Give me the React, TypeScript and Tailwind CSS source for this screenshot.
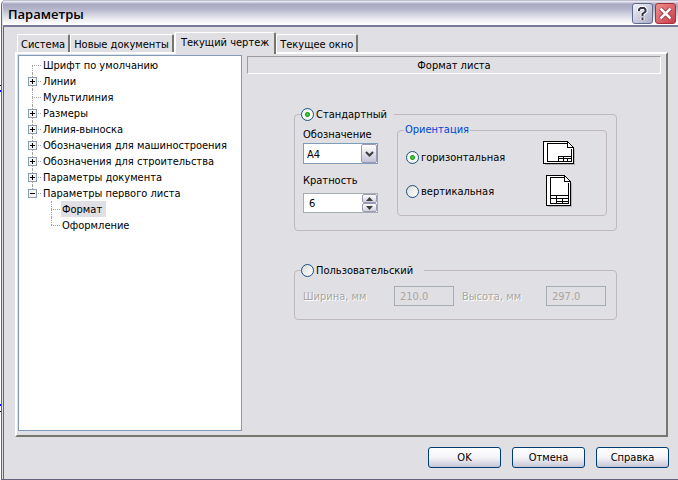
import React, { useState } from 'react';

interface TreeNode {
  label: string;
  mark?: 'plus' | 'minus';
}

const TABS = ['Система', 'Новые документы', 'Текущий чертеж', 'Текущее окно'];

const TREE: TreeNode[] = [
  { label: 'Шрифт по умолчанию' },
  { label: 'Линии', mark: 'plus' },
  { label: 'Мультилиния' },
  { label: 'Размеры', mark: 'plus' },
  { label: 'Линия-выноска', mark: 'plus' },
  { label: 'Обозначения для машиностроения', mark: 'plus' },
  { label: 'Обозначения для строительства', mark: 'plus' },
  { label: 'Параметры документа', mark: 'plus' },
  { label: 'Параметры первого листа', mark: 'minus' }
];

const SUB_TREE = ['Формат', 'Оформление'];

const RADIO =
  'appearance-none w-[13px] h-[13px] shrink-0 rounded-full border border-[#1c5180] bg-[linear-gradient(135deg,#dcdcd7,#ffffff)] checked:bg-[radial-gradient(circle,#55d551_0,#21a121_2px,#21a121_2px,#f6f6f4_3px)]';

const FIELDSET = 'min-w-0 border border-[#bfb8bf] rounded-[4px]';

const SPIN_BUTTON =
  'flex flex-1 items-center justify-center rounded-[2px] border border-[#9a9ab4] bg-[linear-gradient(#ffffff,#d0d0de)]';

function ExpandMark({ kind }: { kind: 'plus' | 'minus' }) {
  return (
    <svg width="9" height="9" viewBox="0 0 9 9" shapeRendering="crispEdges">
      <rect x="0.5" y="0.5" width="8" height="8" fill="#f4f3f0" stroke="#8d9bb5" />
      <path d={kind === 'plus' ? 'M2 4.5H7M4.5 2V7' : 'M2 4.5H7'} stroke="#000" />
    </svg>
  );
}

function TreeRow({ node, first, last }: { node: TreeNode; first: boolean; last: boolean }) {
  return (
    <button type="button" className="flex h-4 items-center text-left">
      <span className="relative flex h-4 w-[15px] items-center">
        <span className={`absolute left-1 border-l border-dotted border-[#a0a0a0] ${first ? 'top-2 bottom-0' : last ? 'top-0 h-2' : 'inset-y-0'}`} />
        <span className="absolute left-1 right-[2px] top-2 border-t border-dotted border-[#a0a0a0]" />
        {node.mark && (
          <span className="relative">
            <ExpandMark kind={node.mark} />
          </span>
        )}
      </span>
      <span className="whitespace-nowrap pt-[2px]">{node.label}</span>
    </button>
  );
}

export default function App() {
  const [tab, setTab] = useState(2);
  const [node, setNode] = useState(0);
  const [mode, setMode] = useState('standard');
  const [orient, setOrient] = useState('horizontal');
  const [factor, setFactor] = useState(6);

  return (
    <div className="relative min-h-screen flex flex-col bg-white pl-px font-['DejaVu_Sans_Condensed','DejaVu_Sans',sans-serif] text-[11px] leading-4 text-black">
      {/* Drawing behind the dialog */}
      <span className="absolute left-0 top-[85px] h-px w-px bg-black" />
      <span className="absolute left-0 top-[90px] h-[2px] w-px bg-[#0000ff]" />
      <span className="absolute left-0 top-[404px] h-[2px] w-px bg-[#0000ff]" />
      <span className="absolute left-0 top-[411px] h-px w-px bg-black" />

      <div className="flex flex-1 flex-col rounded-tl-[5px] border-l border-b border-[#65647f] bg-[#e0dfe3] pl-px">
        <header className="flex h-[27px] items-center justify-between border-b-2 border-[#7a799a] bg-[linear-gradient(#8a89a8_0,#f4f4fa_1px,#dcdce8_2px,#a9a8c2_4px,#b4b4cb_9px,#e6e6ee_18px,#ffffff_24px)] pl-[5px] pr-[2px]">
          <h1 className="pt-[3px] font-['Open_Sans',sans-serif] text-[13px] font-semibold">Параметры</h1>
          <div className="flex gap-[2px] pt-[2px]">
            <button type="button" aria-label="Справка" className="flex h-[21px] w-[21px] items-center justify-center rounded-[3px] border border-[#5f6b8e] bg-[linear-gradient(135deg,#f2f2f8,#a9a9c5)]">
              <svg width="11" height="15" viewBox="0 0 11 15" fill="none">
                <path d="M2 5V3.5L3.5 2H7L8.5 3.5V5.5L5.5 8V10M5.5 11.5V14" stroke="#fff" strokeWidth="4" />
                <path d="M2 5V3.5L3.5 2H7L8.5 3.5V5.5L5.5 8V10M5.5 11.5V14" stroke="#34344a" strokeWidth="2" />
              </svg>
            </button>
            <button type="button" aria-label="Закрыть" className="flex h-[21px] w-[21px] items-center justify-center rounded-[3px] border border-[#a5303c] bg-[linear-gradient(135deg,#f0908c,#c83c48)]">
              <svg width="13" height="13" viewBox="0 0 13 13">
                <path d="M1.5 1.5L11.5 11.5M11.5 1.5L1.5 11.5" stroke="#8c2430" strokeWidth="4" />
                <path d="M1.5 1.5L11.5 11.5M11.5 1.5L1.5 11.5" stroke="#fff" strokeWidth="2.6" />
              </svg>
            </button>
          </div>
        </header>

        <main className="flex flex-1 flex-col border-l border-[#65647f] pl-[11px] pr-[9px] pt-[5px]">
          <div role="tablist" className="flex items-end pl-[2px]">
            {TABS.map((name, i) => (
              <button
                key={name}
                type="button"
                role="tab"
                aria-selected={i === tab}
                onClick={() => setTab(i)}
                className={
                  i === tab
                    ? 'relative z-10 -mb-[2px] h-[22px] whitespace-nowrap rounded-t-[2px] border-l-2 border-t border-r-2 border-l-white border-t-white border-r-[#77766f] bg-[#e0dfe3] px-[5px] pb-[2px]'
                    : 'h-[18px] whitespace-nowrap rounded-t-[2px] border-l border-t border-r-2 border-l-white border-t-white border-r-[#77766f] px-[3px] pt-[2px]'
                }
              >
                {name}
              </button>
            ))}
          </div>

          <div className="mr-px flex flex-1 border-2 border-l-white border-t-white border-r-[#77766f] border-b-[#77766f] pl-px pt-px pb-[4px] pr-[5px]">
            <nav className="w-[224px] shrink-0 border border-[#7f9db9] bg-white pl-[9px] pt-[1px]">
              {TREE.map((item, i) => (
                <TreeRow key={item.label} node={item} first={i === 0} last={i === TREE.length - 1} />
              ))}
              {SUB_TREE.map((name, i) => (
                <button key={name} type="button" onClick={() => setNode(i)} className="flex h-4 items-center pl-[22px]">
                  <span className="relative h-4 w-[11px]">
                    <span className={`absolute left-px top-0 border-l border-dotted border-[#a0a0a0] ${i === 0 ? 'h-4' : 'h-2'}`} />
                    <span className="absolute left-px right-px top-2 border-t border-dotted border-[#a0a0a0]" />
                  </span>
                  <span className={i === node ? 'h-4 bg-[#e0dfe3] pl-px pr-[4px] pt-px' : 'h-4 pl-px pt-px'}>{name}</span>
                </button>
              ))}
            </nav>

            <section className="flex flex-1 flex-col pl-[5px] pt-[1px]">
              <h2 className="h-[18px] border border-l-[#9d9da1] border-t-[#9d9da1] border-r-white border-b-white pt-px text-center">Формат листа</h2>

              <div className="flex flex-col gap-[32px] pl-[47px] pr-[44px] pt-[33px]">
                <fieldset className={`${FIELDSET} h-[124px] pl-[8px] pr-[9px]`}>
                  <legend className="-ml-[2px] pr-[7px]">
                    <label className="flex items-center gap-[2px]">
                      <input type="radio" name="mode" checked={mode === 'standard'} onChange={() => setMode('standard')} className={RADIO} />
                      <span className="-mb-px">Стандартный</span>
                    </label>
                  </legend>
                  <div className="flex justify-between">
                    <div className="flex w-[75px] flex-col pt-[5px]">
                      <label htmlFor="sheet">Обозначение</label>
                      <div className="relative">
                        <select id="sheet" defaultValue="A4" className="h-[21px] w-full appearance-none border border-[#7f9db9] bg-white pl-[3px] pt-[2px]">
                          <option>A4</option>
                          <option>A3</option>
                        </select>
                        <span className="pointer-events-none absolute right-[1px] top-[1px] flex h-[19px] w-[16px] items-center justify-center rounded-[2px] border border-[#9a9ab4] bg-[linear-gradient(#ffffff,#c3c3d6)]">
                          <svg width="9" height="6" viewBox="0 0 9 6">
                            <path d="M1 1L4.5 4.5L8 1" fill="none" stroke="#3c3c3c" strokeWidth="2" />
                          </svg>
                        </span>
                      </div>
                      <label htmlFor="factor" className="mt-[9px]">Кратность</label>
                      <div className="mt-[4px] flex h-[20px] border border-[#a5acb2] bg-white">
                        <input id="factor" value={factor} onChange={(e) => setFactor(Number(e.target.value) || 0)} className="w-0 flex-1 bg-white pl-[5px] pt-px outline-none" />
                        <div className="flex w-[15px] flex-col">
                          <button type="button" aria-label="Больше" onClick={() => setFactor(factor + 1)} className={SPIN_BUTTON}>
                            <svg width="7" height="4" viewBox="0 0 7 4">
                              <path d="M0 4L3.5 0L7 4Z" fill="#3c3c3c" />
                            </svg>
                          </button>
                          <button type="button" aria-label="Меньше" onClick={() => setFactor(factor - 1)} className={SPIN_BUTTON}>
                            <svg width="7" height="4" viewBox="0 0 7 4">
                              <path d="M0 0L3.5 4L7 0Z" fill="#3c3c3c" />
                            </svg>
                          </button>
                        </div>
                      </div>
                    </div>

                    <fieldset className={`${FIELDSET} h-[94px] w-[210px] pl-[8px] pr-[31px]`}>
                      <legend className="-ml-[2px] px-[1px] text-[#0046d5]">Ориентация</legend>
                      <div className="flex flex-col gap-[10px] pt-[3px]">
                        <label className="flex h-[24px] items-end justify-between">
                          <span className="flex items-center gap-[2px]">
                            <input type="radio" name="orient" checked={orient === 'horizontal'} onChange={() => setOrient('horizontal')} className={RADIO} />
                            <span className="-mb-px">горизонтальная</span>
                          </span>
                          <svg width="32" height="24" viewBox="0 0 32 24" shapeRendering="crispEdges" fill="none">
                            <path d="M2 23.5H31.5V8" stroke="#b4b3b8" />
                            <path d="M0.5 0.5H24.5L30.5 6.5V22.5H0.5Z" fill="#fff" stroke="#000" />
                            <path d="M24.5 0.5V6.5H30.5M4.5 20.5V2.5H24M28.5 8V20.5H4M15.5 20V15.5H28M15.5 17.5H28M20.5 16V20M24.5 18V20" stroke="#000" />
                          </svg>
                        </label>
                        <label className="flex h-[32px] items-center justify-between">
                          <span className="flex items-center gap-[2px]">
                            <input type="radio" name="orient" checked={orient === 'vertical'} onChange={() => setOrient('vertical')} className={RADIO} />
                            <span className="-mb-px">вертикальная</span>
                          </span>
                          <svg className="mr-[3px]" width="26" height="32" viewBox="0 0 26 32" shapeRendering="crispEdges" fill="none">
                            <path d="M2 31.5H25.5V8" stroke="#b4b3b8" />
                            <path d="M0.5 0.5H18.5L24.5 6.5V30.5H0.5Z" fill="#fff" stroke="#000" />
                            <path d="M18.5 0.5V6.5H24.5M4.5 28.5V2.5H18M22.5 8V28.5H4M4.5 20.5H22M4.5 23.5H22M10.5 21V28M16.5 24V28M10.5 26.5H22" stroke="#000" />
                          </svg>
                        </label>
                      </div>
                    </fieldset>
                  </div>
                </fieldset>

                <fieldset className={`${FIELDSET} h-[57px] pl-[8px] pr-[10px]`}>
                  <legend className="-ml-[2px] pr-[11px]">
                    <label className="flex items-center gap-[2px]">
                      <input type="radio" name="mode" checked={mode === 'custom'} onChange={() => setMode('custom')} className={RADIO} />
                      <span className="-mb-px">Пользовательский</span>
                    </label>
                  </legend>
                  <div className="flex items-center justify-between pt-[8px] text-[#a8a69f] [text-shadow:1px_1px_#fff]">
                    <label htmlFor="width" className="pt-px">Ширина, мм</label>
                    <input id="width" disabled defaultValue="210.0" className="ml-auto mr-[8px] h-[20px] w-[60px] border border-[#a5acb2] pl-[5px] [text-shadow:none]" />
                    <label htmlFor="height" className="w-[84px] pt-px">Высота, мм</label>
                    <input id="height" disabled defaultValue="297.0" className="h-[20px] w-[60px] border border-[#a5acb2] pl-[5px] [text-shadow:none]" />
                  </div>
                </fieldset>
              </div>
            </section>
          </div>

          <footer className="flex justify-end gap-[11px] pb-[11px] pt-[10px]">
            {['OK', 'Отмена', 'Справка'].map((name) => (
              <button key={name} type="button" className="h-[21px] w-[73px] rounded-[3px] border border-[#003c74] bg-[linear-gradient(#ffffff,#f4f4f8_50%,#c6c5d7)]">
                {name}
              </button>
            ))}
          </footer>
        </main>
      </div>
    </div>
  );
}
